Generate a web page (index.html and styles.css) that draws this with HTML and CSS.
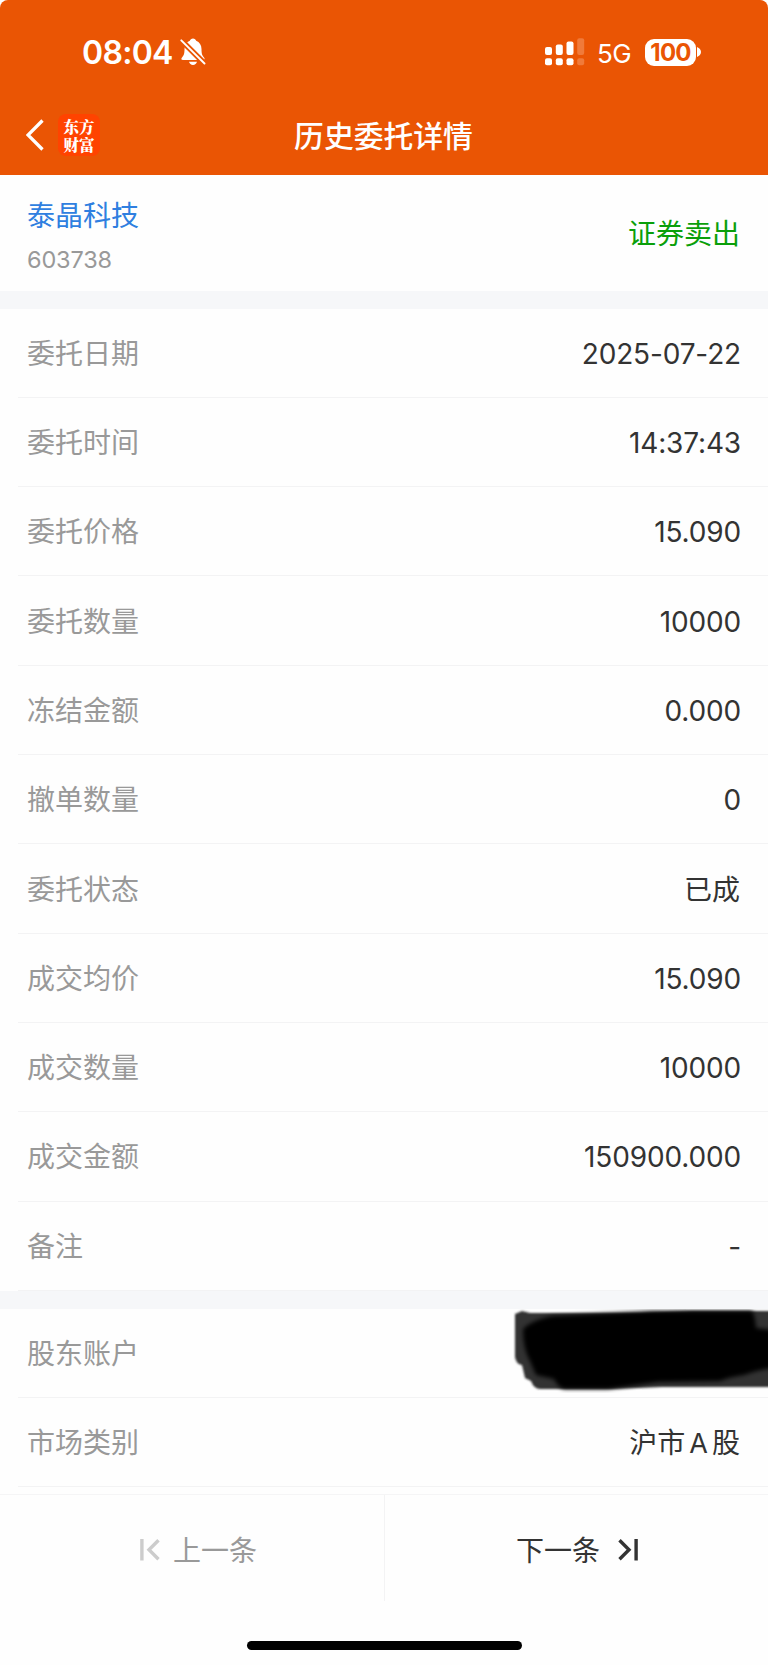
FILE: index.html
```
<!DOCTYPE html>
<html lang="zh-CN">
<head>
	<meta charset="utf-8">
	<title>历史委托详情</title>
	<meta name="viewport" content="width=device-width, initial-scale=1">
	<link rel="stylesheet" href="styles.css">
</head>
<body>
<div class="screen">

	<header class="top">
		<div class="status">
			<span class="time">08:04</span>
			<svg class="bell" width="26" height="28" viewBox="0 0 26 28">
				<path fill="#fff" d="M13 .5c1.6 0 2.8 1 3.2 2.3 3.300 1.300 5.300 4.300 5.300 8.200 0 5 .8 6.700 2.500 8.500.9 1 .8 2.500-1 2.500H3c-1.900 0-2-1.500-1-2.500C3.700 17.700 4.500 16 4.500 11c0-3.900 2-6.900 5.300-8.200C10.200 1.500 11.400.5 13 .5zM9 23.800h8c-.5 2-2 3.200-4 3.200s-3.500-1.200-4-3.200z"/>
				<path stroke="#ea5504" stroke-width="5.500" d="M0 1l26 26"/>
				<path stroke="#fff" stroke-width="1.900" stroke-linecap="round" d="M1.300 2.300l23.200 23.200"/>
			</svg>
			<svg class="signal" width="40" height="28" viewBox="0 0 40 28">
				<g fill="#fff">
					<rect x="0" y="9" width="7" height="8" rx="2"/>
					<rect x="10.800" y="6.500" width="7" height="10.500" rx="2"/>
					<rect x="21.500" y="3.500" width="7" height="13.500" rx="2"/>
					<rect x="0" y="20.300" width="7" height="7" rx="2"/>
					<rect x="10.800" y="20.300" width="7" height="7" rx="2"/>
					<rect x="21.500" y="20.300" width="7" height="7" rx="2"/>
				</g>
				<g fill="#f07a3a">
					<rect x="32.200" y="0.300" width="7" height="16.700" rx="2"/>
					<rect x="32.200" y="20.300" width="7" height="7" rx="2"/>
				</g>
			</svg>
			<span class="net">5G</span>
			<span class="battery">100</span>
			<svg class="nub" width="4" height="10" viewBox="0 0 4 10"><path fill="#fff" d="M0 0c2.500 1 4 2.800 4 5s-1.500 4-4 5z"/></svg>
		</div>
		<div class="nav">
			<svg class="back" width="19" height="32" viewBox="0 0 19 32"><path fill="none" stroke="#fff" stroke-width="3.300" d="M16.500 1.500L2 16l14.500 14.500"/></svg>
			<div class="logo"><div>东方</div><div>财富</div></div>
			<h1>历史委托详情</h1>
		</div>
	</header>

	<section class="stock">
		<div>
			<div class="name">泰晶科技</div>
			<div class="code">603738</div>
		</div>
		<div class="side">证券卖出</div>
	</section>

	<section class="list">
		<div class="row"><span class="label">委托日期</span><span class="num">2025-07-22</span></div>
		<div class="row"><span class="label">委托时间</span><span class="num">14:37:43</span></div>
		<div class="row"><span class="label">委托价格</span><span class="num">15.090</span></div>
		<div class="row"><span class="label">委托数量</span><span class="num">10000</span></div>
		<div class="row"><span class="label">冻结金额</span><span class="num">0.000</span></div>
		<div class="row"><span class="label">撤单数量</span><span class="num">0</span></div>
		<div class="row"><span class="label">委托状态</span><span class="value">已成</span></div>
		<div class="row"><span class="label">成交均价</span><span class="num">15.090</span></div>
		<div class="row"><span class="label">成交数量</span><span class="num">10000</span></div>
		<div class="row"><span class="label">成交金额</span><span class="num">150900.000</span></div>
		<div class="row"><span class="label">备注</span><span class="num">-</span></div>
	</section>

	<section class="list">
		<div class="row">
			<span class="label">股东账户</span>
			<!-- account number is scribbled over -->
			<svg class="scribble" width="256" height="84" viewBox="0 0 256 84">
				<defs>
					<filter id="soft" x="-5%" y="-10%" width="110%" height="120%"><feGaussianBlur stdDeviation="1"/></filter>
					<filter id="softer" x="-5%" y="-10%" width="110%" height="120%"><feGaussianBlur stdDeviation="2.200"/></filter>
				</defs>
				<path filter="url(#soft)" fill="#333" d="M3 5l7-3 8 2h110L180 2h80v76H150l-50 2H28q-6 0-9-8l-6-3-3-13q-6-1-7-8z"/>
				<path filter="url(#softer)" fill="#000" d="M11 20Q20 11 40 7l100-5h100q3 4 4 17l16 2v38q-16 2-28 7-15 2-24 6l-62 1-50 7H52q-6-2-10-10l-18-4-6-14q-7-12-7-32z"/>
			</svg>
		</div>
		<div class="row"><span class="label">市场类别</span><span class="value market">沪市<i>A</i>股</span></div>
	</section>

	<footer class="pager">
		<div class="prev">
			<svg width="20" height="22" viewBox="0 0 20 22"><path fill="none" stroke="#ccc" stroke-width="3.400" d="M1.900 0v21.500M18.500 1.200L9 10.700l9.500 9.500"/></svg>
			<span>上一条</span>
		</div>
		<div class="next">
			<span>下一条</span>
			<svg width="20" height="22" viewBox="0 0 20 22"><path fill="none" stroke="#333" stroke-width="3.400" d="M18.100 0v21.500M1.500 1.200L11 10.700l-9.500 9.500"/></svg>
		</div>
	</footer>
	<div class="home"></div>

</div>
</body>
</html>
```
FILE: styles.css
```
* {
	box-sizing: border-box;
}

body {
	margin: 0;
	background: #fff;
	color: #333;
	font-family: Inter, "Noto Sans CJK SC", sans-serif;
	font-size: 28px;
}

.screen {
	width: 768px;
	height: 1665px;
	display: flex;
	flex-direction: column;
	overflow: hidden;
	background: #fefefe;
}

/* header */
.top {
	height: 174.600px;
	flex: none;
	background: #ea5504;
	color: #fff;
	border-radius: 8px 8px 0 0;
}

.status {
	height: 100px;
	display: flex;
	align-items: center;
	padding: 4px 0 0 82px;
}

.time {
	width: 98px;
	padding-top: 1px;
	font-size: 32px;
	font-weight: 600;
	letter-spacing: -0.700px;
	white-space: nowrap;
}

.signal {
	margin-left: 339px;
}

.net {
	width: 47px;
	margin-left: 12px;
	padding-top: 3px;
	font-size: 26px;
	letter-spacing: -0.500px;
	white-space: nowrap;
}

.battery {
	width: 51px;
	height: 27px;
	margin-left: 1px;
	border-radius: 9px;
	background: #fff;
	color: #ea5504;
	font-size: 24px;
	font-weight: 700;
	line-height: 27px;
	text-align: center;
	letter-spacing: -0.800px;
}

.nub {
	margin-left: 1px;
}

.nav {
	display: grid;
	grid-template-columns: 32px 178px 1fr 210px;
	align-items: center;
	height: 70px;
	padding-left: 26px;
	margin-right: 27px;
}

.logo {
	width: 42px;
	height: 42px;
	border-radius: 8px;
	background: #ff4300;
	font-family: "Noto Serif CJK SC", "Noto Sans CJK SC", serif;
	font-size: 15.500px;
	font-weight: 900;
	line-height: 18px;
	text-align: center;
	padding-top: 3px;
}

.nav h1 {
	margin: 0;
	padding-bottom: 3px;
	font-size: 29.800px;
	font-weight: 500;
	text-align: center;
	white-space: nowrap;
}

/* stock */
.stock {
	height: 116px;
	flex: none;
	display: flex;
	justify-content: space-between;
	align-items: center;
	padding: 0 28px 0 27px;
}

.name {
	color: #2f7fe0;
	line-height: 42px;
	padding-top: 5px;
}

.code {
	color: #999;
	font-size: 23.500px;
	line-height: 32px;
	padding-top: 7px;
	letter-spacing: -0.150px;
}

.side {
	color: #0a9f0a;
	padding-bottom: 2px;
}

/* detail rows */
.list {
	flex: none;
	border-top: 18px solid #f6f7f9;
}

.row {
	position: relative;
	height: 89.300px;
	margin-left: 18px;
	padding: 0 28px 0 9px;
	display: flex;
	justify-content: space-between;
	align-items: center;
	border-bottom: 1px solid #f3f3f4;
}

.label {
	color: #999;
	padding-bottom: 2px;
}

.value {
	padding-bottom: 2px;
}

.num {
	padding-top: 2px;
	margin-right: -1px;
	letter-spacing: -0.150px;
}

.market i {
	font-style: normal;
	padding: 0 4px;
	font-size: 27px;
}

.scribble {
	position: absolute;
	right: 0;
	top: 0;
}

/* pager */
.pager {
	flex: none;
	height: 107px;
	margin-top: 7px;
	border-top: 1px solid #f5f5f6;
	display: grid;
	grid-template-columns: 384px 384px;
}

.prev, .next {
	display: flex;
	align-items: center;
	padding-top: 3px;
}

.prev span, .next span {
	padding-bottom: 2px;
}

.prev {
	padding-left: 140px;
	gap: 13px;
	color: #999;
}

.next {
	padding-left: 131px;
	gap: 18px;
	border-left: 1px solid #f3f3f4;
}

.home {
	width: 275px;
	height: 9px;
	margin: 40px auto 0;
	border-radius: 5px;
	background: #000;
	flex: none;
}
```
